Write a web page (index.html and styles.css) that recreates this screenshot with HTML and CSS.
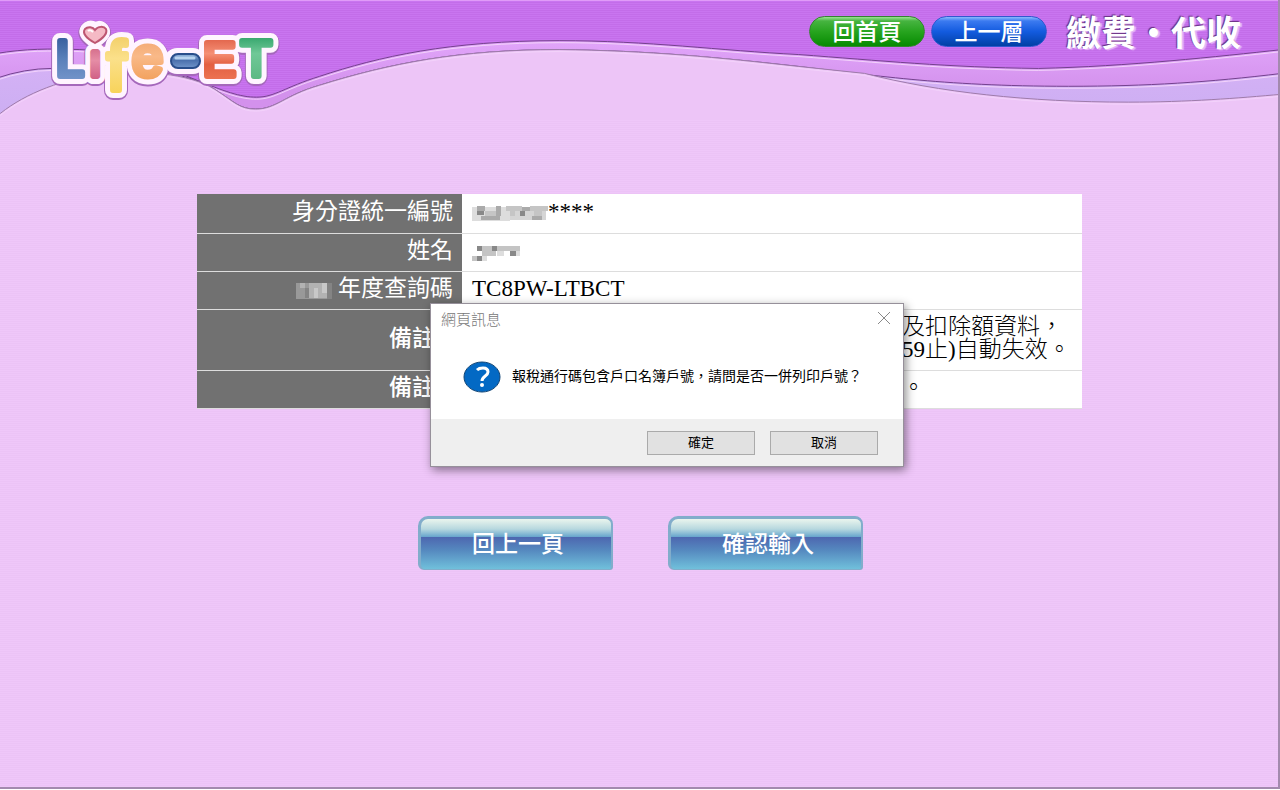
FILE: index.html
```html
<!DOCTYPE html>
<html lang="zh-Hant">
<head>
<meta charset="utf-8">
<meta name="viewport" content="width=device-width, initial-scale=1">
<title>Life-ET 繳費・代收</title>
<link rel="stylesheet" href="styles.css">
</head>
<body>
<div class="page">
  <header class="header">
    <svg class="waves" viewBox="0 0 1280 120" preserveAspectRatio="none" aria-hidden="true">
      <defs>
        <path id="upper" d="M-4 53C25 48 50 48 80 49C130 51 165 67 195 79C225 91 240 97 257 97C275 97 285 87 320 76C380 56 450 40 560 40C650 40 720 50 800 54C880 60 950 67 1040 68C1130 66 1220 56 1284 49V124H-4Z"/>
        <path id="lower" d="M-4 78Q25 68 52 68L120 69C150 69 190 73 215 89C235 102 240 109 256 109C277 109 285 95 320 85C390 63 460 49 560 49C650 50 720 57 800 66C870 74 940 86 1070 86C1150 86 1210 82 1284 73V124H-4Z"/>
        <path id="base" d="M-4 117C20 96 55 81 100 73C140 69 190 73 215 89C235 102 240 109 256 109C277 109 285 95 320 85C390 63 460 49 560 49C650 50 720 57 800 66L866 73C940 92 1030 102 1130 102C1190 102 1240 98 1284 94V124H-4Z"/>
        <linearGradient id="mid" x2="0" y2="1"><stop stop-color="#e1a5fa"/><stop offset=".6" stop-color="#d391ec"/></linearGradient>
        <linearGradient id="lav" x2="0" y2="1"><stop stop-color="#d7b2f6"/><stop offset="1" stop-color="#cbaef2"/></linearGradient>
      </defs>
      <use href="#upper" fill="url(#mid)"/>
      <use href="#upper" class="glow" y="2"/>
      <use href="#upper" class="edge"/>
      <use href="#lower" fill="url(#lav)"/>
      <use href="#lower" class="glow" y="2"/>
      <use href="#lower" class="edge"/>
      <use href="#base" fill="#edc5f7"/>
      <use href="#base" class="glow" y="2"/>
      <use href="#base" class="edge soft"/>
    </svg>
    <svg class="logo" viewBox="0 0 240 90" role="img" aria-label="Life-ET">
      <defs>
        <linearGradient id="blue" x2="0" y2="1"><stop stop-color="#9bbde2"/><stop offset=".45" stop-color="#4b70ad"/><stop offset="1" stop-color="#7195ca"/></linearGradient>
        <linearGradient id="navy" x2="0" y2="1"><stop stop-color="#2f5596"/><stop offset=".5" stop-color="#5a80ba"/><stop offset="1" stop-color="#7a9ace"/></linearGradient>
        <linearGradient id="pink" x2="0" y2="1"><stop stop-color="#c44f70"/><stop offset=".5" stop-color="#e58ca5"/><stop offset="1" stop-color="#c9507a"/></linearGradient>
        <linearGradient id="gold" x2="0" y2="1"><stop stop-color="#efc95e"/><stop offset=".4" stop-color="#fbe08a"/><stop offset="1" stop-color="#f6cf4c"/></linearGradient>
        <linearGradient id="orange" x2="0" y2="1"><stop stop-color="#ee9c62"/><stop offset=".5" stop-color="#f9b988"/><stop offset="1" stop-color="#f09a50"/></linearGradient>
        <linearGradient id="red" x2="0" y2="1"><stop stop-color="#d95138"/><stop offset=".4" stop-color="#f58f75"/><stop offset=".6" stop-color="#e35f42"/><stop offset="1" stop-color="#f07a59"/></linearGradient>
        <linearGradient id="green" x2="0" y2="1"><stop stop-color="#229a5f"/><stop offset=".4" stop-color="#6fc897"/><stop offset="1" stop-color="#57b47e"/></linearGradient>
        <g id="letters">
          <text x="10" y="58" font-size="50">L</text>
          <text x="43" y="58" font-size="45">ı</text>
          <text x="61" y="72" font-size="68">f</text>
          <text x="86" y="58" font-size="56">e</text>
          <rect x="126" y="38" width="26" height="10" rx="5"/>
          <text x="157" y="58" font-size="49">E</text>
          <text x="195" y="58" font-size="50">T</text>
          <path d="M49 22C43 18 40 15 42 12C44 9 48 11 49 14C51 10 55 10 56 13C57 16 52 19 49 22Z"/>
        </g>
      </defs>
      <use href="#letters" class="halo shade" y="1"/>
      <use href="#letters" class="halo"/>
      <g class="ink">
        <text fill="url(#navy)" stroke="url(#navy)" x="10" y="58" font-size="50">L</text>
        <text fill="url(#pink)" stroke="url(#pink)" x="43" y="58" font-size="45">ı</text>
        <text fill="url(#orange)" stroke="url(#orange)" x="86" y="58" font-size="56">e</text>
        <text fill="url(#gold)" stroke="url(#gold)" x="61" y="72" font-size="68">f</text>
        <text fill="url(#red)" stroke="url(#red)" x="157" y="58" font-size="49">E</text>
        <text fill="url(#green)" stroke="url(#green)" x="195" y="58" font-size="50">T</text>
      </g>
      <rect x="125" y="36" width="29" height="14" rx="7" fill="url(#blue)" stroke="#294d8b" stroke-width="2"/>
      <path d="M130 40H148" stroke="#b8d2ef" stroke-width="3" stroke-linecap="round"/>
      <path d="M49 25C40 20 36 15 39 11C42 8 47 9 49 12C52 8 58 8 60 11C62 16 56 21 49 25Z" fill="#f5bac5" stroke="#bd5671" stroke-width="2"/>
      <path d="M42 13Q44 11 47 14" fill="none" stroke="#fff" stroke-width="2"/>
    </svg>
    <nav class="nav">
      <a class="pill green" href="#home">回首頁</a>
      <a class="pill blue" href="#up">上一層</a>
      <h1 class="title">繳費・代收</h1>
    </nav>
  </header>

  <main class="main">
    <table class="info">
      <tr class="first">
        <th scope="row">身分證統一編號</th>
        <td>
          <svg class="mosaic" width="76" height="18" viewBox="0 0 76 18" shape-rendering="crispEdges" aria-hidden="true"><path fill="#ddd" d="M0 3H38V17H0Z"/><path fill="#aaa" d="M5 2H13V7H5ZM9 12H28V16H9ZM24 2H29V12H24ZM50 3H58V7H50ZM60 12H70V16H60Z"/><path fill="#c5c5c5" d="M13 7H24V12H13ZM34 2H50V7H34ZM38 7H43V12H38ZM58 2H76V7H58ZM62 7H70V12H62Z"/><path fill="#888" d="M5 7H12V11H5ZM48 7H53V12H48Z"/><path fill="#d5d5d5" d="M38 12H60V16H38ZM53 7H62V12H53ZM43 7H48V12H43ZM70 7H74V16H70Z"/></svg><span class="code">****</span>
        </td>
      </tr>
      <tr>
        <th scope="row">姓名</th>
        <td><svg class="mosaic" width="48" height="16" viewBox="0 0 48 16" shape-rendering="crispEdges" aria-hidden="true"><path fill="#c4c4c4" d="M5 1H48V6H5ZM10 6H24V11H10ZM0 11H10V16H0Z"/><path fill="#888" d="M5 1H10V6H5ZM20 1H25V6H20ZM38 6H44V11H38ZM5 11H10V16H5Z"/><path fill="#ddd" d="M25 6H32V11H25ZM10 11H15V16H10ZM44 6H48V11H44Z"/></svg></td>
      </tr>
      <tr>
        <th scope="row"><svg class="mosaic" width="36" height="16" viewBox="0 0 36 16" shape-rendering="crispEdges" aria-hidden="true"><path fill="#999" d="M0 0H32V16H0Z"/><path fill="#b2b2b2" d="M4 0H9V5H4ZM13 0H31V15H13Z"/><path fill="#c8c8c8" d="M18 5H22V15H18ZM26 0H31V10H26Z"/><path fill="#848484" d="M9 5H13V15H9ZM31 0H36V16H31Z"/></svg> 年度查詢碼</th>
        <td><span class="code">TC8PW-LTBCT</span></td>
      </tr>
      <tr class="tall">
        <th class="strong" scope="row">備註1:</th>
        <td class="note">及扣除額資料，<br><span class="code">59</span>止<span class="code">)</span>自動失效。</td>
      </tr>
      <tr>
        <th class="strong" scope="row">備註2:</th>
        <td class="note">。</td>
      </tr>
    </table>
    <div class="actions">
      <button class="action" type="button">回上一頁</button>
      <button class="action" type="button">確認輸入</button>
    </div>
  </main>

  <section class="dialog" role="dialog" aria-labelledby="dialog-title">
    <div class="dialog-head">
      <h2 class="dialog-title" id="dialog-title">網頁訊息</h2>
      <button class="close" type="button" aria-label="關閉"><svg width="14" height="12" viewBox="0 0 14 12"><path d="M1 0L13 12M13 0L1 12" stroke="#888" fill="none"/></svg></button>
    </div>
    <div class="dialog-body">
      <svg class="question" width="38" height="32" viewBox="0 0 38 32" aria-hidden="true"><ellipse cx="19" cy="16" rx="18" ry="15" fill="#0369c4" stroke="#124676" stroke-width="1"/><path d="M14 9C16 7 18 7 20 7C23 7 25 8 25 11C25 15 19 15 19 20" fill="none" stroke="#fff" stroke-width="3"/><circle cx="19" cy="24" r="2" fill="#fff"/></svg>
      <p class="message">報稅通行碼包含戶口名簿戶號，請問是否一併列印戶號？</p>
    </div>
    <div class="dialog-foot">
      <button class="choice" type="button">確定</button>
      <button class="choice" type="button">取消</button>
    </div>
  </section>
</div>
</body>
</html>
```
FILE: styles.css
```css
* { box-sizing: border-box; }

body {
  margin: 0;
  background: #fff;
  font-family: "Liberation Serif", "Noto Sans CJK TC", serif;
  color: #000;
}

.page {
  position: relative;
  min-height: calc(100vh - 1px);
  border-right: 2px solid #a38aae;
  border-bottom: 2px solid #a38aae;
  background: repeating-linear-gradient(#efc7f9 0 1px, #ecc3f6 1px 2px);
}

.header {
  position: relative;
  height: 120px;
  background: repeating-linear-gradient(#c975f0 0 1px, #c36de9 1px 2px);
  border-top: 1px solid #e09bf8;
  display: flex;
  justify-content: space-between;
  align-items: flex-start;
  padding: 12px 37px 0 46px;
}

.waves {
  position: absolute;
  inset: 0;
  width: 100%;
  height: 100%;
}

.waves .edge, .waves .glow {
  fill: none;
  stroke: #74418d;
  stroke-width: 1;
  vector-effect: non-scaling-stroke;
}
.waves .glow { stroke: #f3d3fb; }
.waves .soft { stroke: #9d7ba9; }

.logo {
  position: relative;
  width: 240px;
  height: 90px;
  margin-top: 5px;
  overflow: visible;
}
.logo text { font-family: "Liberation Sans", sans-serif; }
.halo {
  fill: #fff4ff;
  stroke: #fff4ff;
  stroke-width: 16px;
  stroke-linejoin: round;
  stroke-linecap: round;
}
.shade { fill: #a568bb; stroke: #a568bb; stroke-width: 18px; }
.ink { stroke-width: 6px; stroke-linejoin: round; }

.nav {
  position: relative;
  display: flex;
  align-items: center;
  gap: 6px;
  font-family: "Noto Sans CJK TC", sans-serif;
}

.pill {
  width: 116px;
  height: 31px;
  border-radius: 16px;
  border: 1px solid #33852f;
  color: #fff;
  font-size: 23px;
  font-weight: 500;
  line-height: 26px;
  text-align: center;
  text-decoration: none;
}
.green { background: linear-gradient(#9ce394 0, #46b440 4px, #27a41f 50%, #078b02); }
.blue { border-color: #3158cf; background: linear-gradient(#8ab9ff 0, #3b7af0 4px, #135bdf 50%, #0240a5); }

.title {
  margin: 0 0 0 13px;
  font-size: 35px;
  line-height: 36px;
  font-weight: 700;
  color: #fff;
  text-shadow: -1px -1px 1px #683080, 2px 1px 1px #e6b9f6;
}

.main {
  display: flex;
  flex-direction: column;
  align-items: center;
  padding-top: 74px;
}

.info {
  width: 885px;
  max-width: 100%;
  border-collapse: collapse;
  font-size: 23px;
  line-height: 23px;
}
.info tr { height: 38px; border-bottom: 1px solid #ddd; }
.info .first { height: 39px; }
.info .tall { height: 61px; }
.info th {
  width: 30%;
  padding: 0 9px 3px;
  background: #717171;
  color: #fff;
  font-weight: 400;
  text-align: right;
  white-space: nowrap;
}
.info .strong { font-weight: 500; }
.info td { padding: 0 10px 3px; background: #fff; font-weight: 300; }
.info .note { padding-left: 440px; }
.code { font-weight: 400; }
.mosaic { vertical-align: -3px; }

.actions {
  display: flex;
  gap: 55px;
  margin-top: 107px;
  padding-left: 3px;
}
.action {
  width: 195px;
  height: 54px;
  padding: 0 0 3px 4px;
  border: 3px solid #82adcb;
  border-bottom-width: 1px;
  border-right-width: 2px;
  border-radius: 10px 8px 3px 6px;
  background: linear-gradient(#eaf5ee 0, #b7d8df 20%, #65a4cc 36%, #4d68b0 37%, #5588bf 62%, #70c0db 100%);
  color: #fff;
  font: 500 23px/28px "Noto Sans CJK TC", sans-serif;
}

.dialog {
  position: absolute;
  top: 303px;
  left: calc(50% - 209px);
  width: 474px;
  border: 1px solid #96909a;
  background: #fff;
  box-shadow: 2px 3px 9px rgba(0, 0, 0, .45);
  font-family: "Noto Sans CJK TC", sans-serif;
}
.dialog-head {
  display: flex;
  justify-content: space-between;
  align-items: center;
  height: 28px;
  padding: 0 12px 0 10px;
}
.dialog-title { margin: 0; font-size: 15px; font-weight: 300; color: #777; }
.close { display: flex; padding: 0; border: 0; background: none; }
.dialog-body {
  display: flex;
  align-items: center;
  gap: 11px;
  height: 87px;
  padding: 2px 0 0 32px;
}
.message { margin: 0; padding-bottom: 4px; font-size: 14px; white-space: nowrap; }
.dialog-foot {
  display: flex;
  justify-content: flex-end;
  gap: 15px;
  padding: 12px 25px 11px;
  background: #efefef;
}
.choice {
  width: 108px;
  height: 24px;
  padding: 0 0 2px;
  border: 1px solid #aaa;
  background: #e1e1e1;
  color: #000;
  font: 400 13px/20px "Noto Sans CJK TC", sans-serif;
}
```
